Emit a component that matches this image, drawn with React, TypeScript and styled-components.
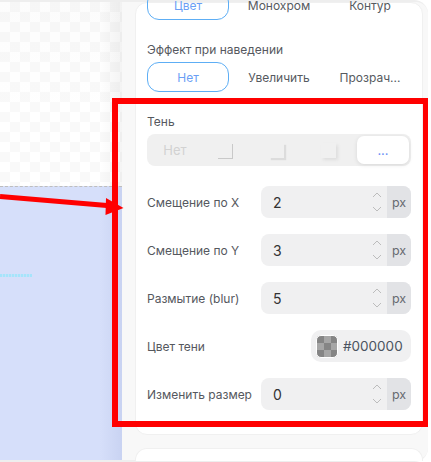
import React from "react";
import styled, { createGlobalStyle } from "styled-components";

const Global = createGlobalStyle`
  html, body { margin: 0; padding: 0; background: #fff; overflow: hidden; }
  body { font-family: Inter, "Noto Sans", sans-serif; }
`;

const Page = styled.div`
  position: relative;
  width: 431px;
  height: 462px;
  overflow: hidden;
  background: #fff;
`;

const Frame = styled.div`
  box-sizing: border-box;
  width: 428px;
  height: 462px;
  padding: 2px 0;
  display: flex;
  background: #eeeeee;
  border-radius: 0 14px 14px 0;
`;

const Canvas = styled.div`
  width: 122px;
  flex: none;
  display: flex;
  flex-direction: column;
`;

const Checker = styled.div`
  height: 184px;
  flex: none;
  background-color: #ffffff;
  background-image:
    linear-gradient(to right, rgba(0, 0, 0, 0) 100px, rgba(0, 0, 0, 0.045) 122px),
    linear-gradient(to bottom, rgba(0, 0, 0, 0.012) 0, rgba(0, 0, 0, 0) 120px),
    conic-gradient(#f9f9f9 25%, #ffffff 0 50%, #f9f9f9 0 75%, #ffffff 0);
  background-size: 100% 100%, 100% 100%, 20px 20px;
`;

const Artboard = styled.div`
  flex: 1;
  border-top: 1px dashed #bdbdbd;
  background: linear-gradient(to right, #d6dffa 0, #d6dffa 100px, #c9d3f2 122px);
`;

const Guide = styled.div`
  width: 32px;
  height: 3px;
  margin-top: 87px;
  background: repeating-linear-gradient(to right, #a6e4fb 0 2px, #c4e3fa 2px 3px);
`;

const Panel = styled.div`
  flex: 1;
  box-sizing: border-box;
  padding: 0 5px 0 13px;
  background: #f8f8f8;
  border-radius: 0 12px 12px 0;
  display: flex;
  flex-direction: column;
  gap: 13px;
`;

const Card = styled.div`
  flex: none;
  box-sizing: border-box;
  width: 288px;
  padding: 0 11px 24px;
  background: #fff;
  border: 1px solid #f0f0f0;
  border-radius: 12px;
`;

const EmptyCard = styled(Card)`
  height: 13px;
  padding: 0;
  border-bottom: none;
  border-radius: 12px 12px 0 0;
`;

const Options = styled.div<{ $first?: boolean }>`
  display: grid;
  grid-template-columns: repeat(3, 82px);
  gap: 9px;
  margin-top: ${(p) => (p.$first ? "-13px" : "0")};
`;

const Option = styled.div<{ $active?: boolean }>`
  box-sizing: border-box;
  height: 30px;
  display: flex;
  align-items: center;
  justify-content: center;
  font-size: 12px;
  color: ${(p) => (p.$active ? "#6b9ff5" : "#565a60")};
  border: ${(p) => (p.$active ? "1px solid #5daef5" : "1px solid transparent")};
  border-radius: 12px;
  white-space: nowrap;
`;

const Section = styled.div`
  margin-top: 20px;
`;

const Label = styled.div`
  height: 20px;
  margin-bottom: 2px;
  font-size: 12px;
  line-height: 20px;
  color: #55585e;
`;

const Segmented = styled.div`
  box-sizing: border-box;
  height: 32px;
  padding: 2px;
  display: grid;
  grid-template-columns: repeat(5, 52px);
  background: #f0f0f0;
  border-radius: 8px;
`;

const Segment = styled.div<{ $active?: boolean }>`
  display: flex;
  align-items: center;
  justify-content: center;
  font-size: 13px;
  color: ${(p) => (p.$active ? "#6b8ff5" : "#d2d2d2")};
  background: ${(p) => (p.$active ? "#fff" : "transparent")};
  border-radius: 7px;
  box-shadow: ${(p) => (p.$active ? "0 1px 4px rgba(0, 0, 0, 0.1)" : "none")};
`;

const ShadowGlyph = styled.div<{ $shadow: string }>`
  width: 15px;
  height: 15px;
  margin: 0 6px 0 0;
  background: #f0f0f0;
  box-shadow: ${(p) => p.$shadow};
`;

const Rows = styled.div`
  margin-top: 20px;
  display: flex;
  flex-direction: column;
  gap: 16px;
`;

const Row = styled.div`
  height: 32px;
  display: flex;
  align-items: center;
  justify-content: space-between;
`;

const RowLabel = styled.div`
  font-size: 12px;
  color: #55585e;
  white-space: nowrap;
`;

const NumberField = styled.div`
  width: 150px;
  height: 32px;
  display: flex;
  background: #f0f0f1;
  border-radius: 8px;
  overflow: hidden;
`;

const Value = styled.div`
  flex: 1;
  padding-left: 12px;
  font-size: 14px;
  line-height: 33px;
  color: #333;
`;

const Stepper = styled.div`
  width: 14px;
  margin-right: 3px;
  display: flex;
  flex-direction: column;
  align-items: center;
  justify-content: center;
  gap: 8px;
`;

const Unit = styled.div`
  width: 24px;
  display: flex;
  align-items: center;
  justify-content: center;
  font-size: 12.5px;
  color: #666a70;
  background: #e2e3e6;
`;

const ColorField = styled.div`
  box-sizing: border-box;
  width: 100px;
  height: 32px;
  padding: 0 5px;
  display: flex;
  align-items: center;
  gap: 5px;
  background: #f0f0f1;
  border-radius: 10px;
`;

const Swatch = styled.div`
  box-sizing: border-box;
  width: 22px;
  height: 23px;
  border: 1px solid #fff;
  border-radius: 5px;
  background-color: #8a8a8a;
  background-image: conic-gradient(#a6a6a6 25%, #858585 0 50%, #a6a6a6 0 75%, #858585 0);
  background-size: 14px 14px;
`;

const Hex = styled.div`
  font-size: 13.5px;
  color: #4a5360;
`;

const RedBox = styled.div`
  position: absolute;
  box-sizing: border-box;
  left: 112px;
  top: 98px;
  width: 316px;
  height: 329px;
  border: solid #ff0000;
  border-width: 6px 5px 6px 6px;
`;

const Arrow = styled.svg`
  position: absolute;
  left: 0;
  top: 190px;
`;

const Chevron = ({ up }: { up?: boolean }) => (
  <svg width="10" height="6" viewBox="0 0 10 6" fill="none" stroke="#bcbcbc" strokeWidth="1">
    <path d={up ? "M1 5 L5 1 L9 5" : "M1 1 L5 5 L9 1"} />
  </svg>
);

const Num = ({ label, value }: { label: string; value: string }) => (
  <Row>
    <RowLabel>{label}</RowLabel>
    <NumberField>
      <Value>{value}</Value>
      <Stepper>
        <Chevron up />
        <Chevron />
      </Stepper>
      <Unit>px</Unit>
    </NumberField>
  </Row>
);

export default function App() {
  return (
    <Page>
      <Global />
      <Frame>
        <Canvas>
          <Checker />
          <Artboard>
            <Guide />
          </Artboard>
        </Canvas>
        <Panel>
          <Card>
            <Options $first>
              <Option $active>Цвет</Option>
              <Option>Монохром</Option>
              <Option>Контур</Option>
            </Options>
            <Section>
              <Label>Эффект при наведении</Label>
              <Options>
                <Option $active>Нет</Option>
                <Option>Увеличить</Option>
                <Option>Прозрач...</Option>
              </Options>
            </Section>
            <Section>
              <Label>Тень</Label>
              <Segmented>
                <Segment>Нет</Segment>
                <Segment>
                  <ShadowGlyph $shadow="1px 1px 0 #c9c9c9" />
                </Segment>
                <Segment>
                  <ShadowGlyph $shadow="2px 2px 1px #dcdcdc" />
                </Segment>
                <Segment>
                  <ShadowGlyph $shadow="2px 2px 3px #dedede" />
                </Segment>
                <Segment $active>...</Segment>
              </Segmented>
            </Section>
            <Rows>
              <Num label="Смещение по X" value="2" />
              <Num label="Смещение по Y" value="3" />
              <Num label="Размытие (blur)" value="5" />
              <Row>
                <RowLabel>Цвет тени</RowLabel>
                <ColorField>
                  <Swatch />
                  <Hex>#000000</Hex>
                </ColorField>
              </Row>
              <Num label="Изменить размер" value="0" />
            </Rows>
          </Card>
          <EmptyCard />
        </Panel>
      </Frame>
      <RedBox />
      <Arrow width="124" height="30" viewBox="0 0 124 30">
        <path d="M0 6.5 L107 15.5" stroke="#ff0000" strokeWidth="5" fill="none" />
        <path d="M106 8 L123.5 18 L105.5 25 Z" fill="#ff0000" />
      </Arrow>
    </Page>
  );
}
